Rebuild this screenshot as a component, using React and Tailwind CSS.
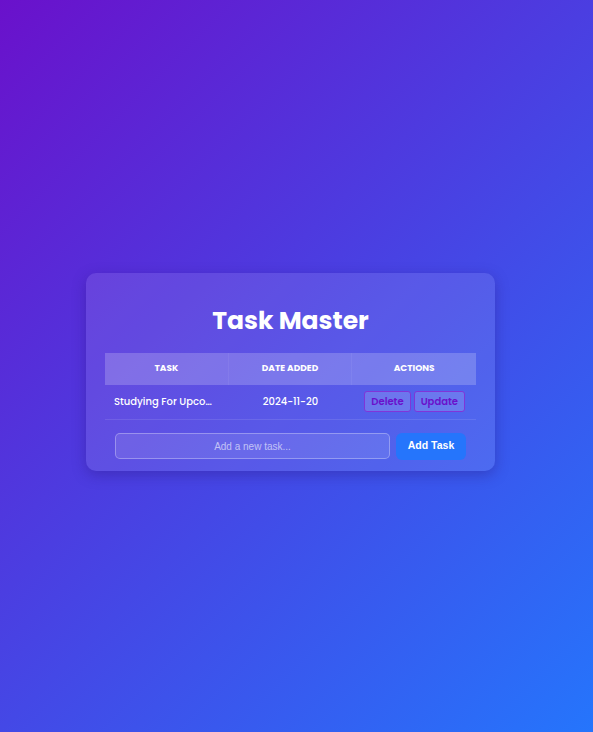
import React, { useState } from 'react';

const FONT = { fontFamily: 'Poppins, Inter, "Noto Sans", sans-serif' };

export default function App() {
    const [tasks, setTasks] = useState([
        { id: 1, text: 'Studying For Upcoming Exams', date: '2024-11-20' },
    ]);
    const [draft, setDraft] = useState('');

    const addTask = () => {
        if (!draft.trim()) return;
        setTasks(prev => [...prev, { id: Date.now(), text: draft, date: '2024-11-20' }]);
        setDraft('');
    };

    return (
        <div
            className="min-h-screen w-full flex items-center justify-center pr-[12px] pt-[11px] bg-[linear-gradient(135deg,#6a11cb_0%,#2575fc_100%)]"
            style={FONT}
        >
            <div className="w-[409px] rounded-[10px] bg-white/10 shadow-[0_4px_14px_rgba(40,20,120,0.35)] px-[19px] pt-[29px] pb-[11px]">
                <h1 className="text-center text-white text-[25px] font-bold leading-[38px] mb-[13px]">
                    Task Master
                </h1>

                {/* table */}
                <div className="w-full">
                    <div className="grid grid-cols-3 h-[32px] bg-white/20 text-white text-[9px] font-bold uppercase">
                        <div className="flex items-center justify-center border-r border-white/5">Task</div>
                        <div className="flex items-center justify-center border-r border-white/5">Date Added</div>
                        <div className="flex items-center justify-center">Actions</div>
                    </div>
                    {tasks.map(t => (
                        <div key={t.id} className="grid grid-cols-3 h-[35px] border-b border-white/10 text-white text-[10px] font-medium">
                            <div className="flex items-center pl-[9px] pr-[12px] min-w-0">
                                <span className="truncate">{t.text}</span>
                            </div>
                            <div className="flex items-center justify-center">{t.date}</div>
                            <div className="flex items-center justify-center gap-[3px] pl-[1px]">
                                <button
                                    onClick={() => setTasks(prev => prev.filter(x => x.id !== t.id))}
                                    className="h-[21px] px-[6px] rounded-[3px] border border-[#8035d8] bg-white/15 text-[#6a11cb] text-[10px] font-semibold"
                                >
                                    Delete
                                </button>
                                <button className="h-[21px] px-[6px] rounded-[3px] border border-[#8035d8] bg-white/15 text-[#6a11cb] text-[10px] font-semibold">
                                    Update
                                </button>
                            </div>
                        </div>
                    ))}
                </div>

                {/* add form */}
                <div className="flex items-center gap-[6px] px-[10px] mt-[13px]">
                    <input
                        value={draft}
                        onChange={e => setDraft(e.target.value)}
                        placeholder="Add a new task..."
                        className="flex-1 h-[26px] rounded-[5px] border border-white/30 bg-white/10 text-center text-white text-[10px] placeholder:text-white/60 outline-none"
                        style={{ fontFamily: 'Arial, "Liberation Sans", sans-serif' }}
                    />
                    <button
                        onClick={addTask}
                        className="w-[70px] h-[27px] rounded-[6px] bg-[#2575fc] text-white text-[10.5px] font-bold"
                        style={{ fontFamily: 'Arial, "Liberation Sans", sans-serif' }}
                    >
                        Add Task
                    </button>
                </div>
            </div>
        </div>
    );
}
